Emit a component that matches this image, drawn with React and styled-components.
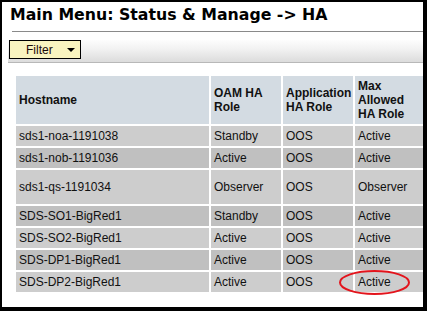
import React from "react";
import styled, { createGlobalStyle } from "styled-components";

const Global = createGlobalStyle`
  html, body { margin: 0; padding: 0; background: #fff; }
  body { font-family: "Liberation Sans", Arial, sans-serif; }
`;

const Frame = styled.div`
  box-sizing: border-box;
  width: 427px;
  height: 311px;
  border-style: solid;
  border-color: #000;
  border-width: 2px 4px 4px 2px;
  background: #fff;
  overflow: hidden;
  display: flex;
  flex-direction: column;
`;

const Title = styled.h1`
  margin: 0;
  padding: 4px 0 0 8px;
  height: 24px;
  box-sizing: border-box;
  font-family: "DejaVu Sans", Verdana, sans-serif;
  font-weight: bold;
  font-size: 15.75px;
  line-height: 18px;
  color: #000;
  white-space: nowrap;
`;

const Rule = styled.div`
  margin: 5px 0 0 10px;
  height: 1px;
  background: #8a8a8a;
`;

const FilterBar = styled.div`
  margin: 8px 0 0 6px;
  height: 23px;
  box-sizing: border-box;
  background: linear-gradient(to bottom, #fdfdfd 0%, #f2f2f2 40%, #dcdcdc 100%);
  border-bottom: 1px solid #b8b8b8;
  display: flex;
  align-items: flex-start;
  padding-left: 1px;
`;

const FilterButton = styled.button`
  box-sizing: border-box;
  width: 72px;
  height: 19px;
  margin: 0;
  padding: 0 0 0 16px;
  background: #f9f4c0;
  border: 1px solid #000;
  display: flex;
  align-items: center;
  font-family: "Liberation Sans", Arial, sans-serif;
  font-size: 12px;
  color: #1a0a0a;
  cursor: pointer;
`;

const Caret = styled.span`
  margin-left: 14px;
  width: 0;
  height: 0;
  border-left: 4px solid transparent;
  border-right: 4px solid transparent;
  border-top: 4px solid #000;
`;

const TableWrap = styled.div`
  margin: 11px 0 0 12px;
`;

const Table = styled.table`
  border-collapse: separate;
  border-spacing: 2px;
  table-layout: fixed;
  width: 413px;
  font-family: "Liberation Sans", Arial, sans-serif;
  font-size: 12px;
  color: #111;
`;

const Th = styled.th`
  width: ${p => p.$w}px;
  height: 48px;
  padding: 0 3px;
  background: #d3dbe2;
  text-align: left;
  vertical-align: middle;
  font-weight: bold;
  line-height: 14px;
  box-sizing: border-box;
`;

const Td = styled.td`
  height: ${p => (p.$tall ? 34 : 20)}px;
  padding: 0 3px;
  background: ${p => (p.$dark ? "#c0c0c0" : "#cdcdcd")};
  vertical-align: middle;
  line-height: 14px;
  white-space: nowrap;
  box-sizing: border-box;
`;

const Marked = styled.div`
  position: relative;
`;

const Ellipse = styled.svg`
  position: absolute;
  left: -19px;
  top: -5px;
  width: 71px;
  height: 25px;
  overflow: visible;
  pointer-events: none;
`;

const rows = [
  ["sds1-noa-1191038", "Standby", "OOS", "Active"],
  ["sds1-nob-1191036", "Active", "OOS", "Active"],
  ["sds1-qs-1191034", "Observer", "OOS", "Observer", true],
  ["SDS-SO1-BigRed1", "Standby", "OOS", "Active"],
  ["SDS-SO2-BigRed1", "Active", "OOS", "Active"],
  ["SDS-DP1-BigRed1", "Active", "OOS", "Active"],
  ["SDS-DP2-BigRed1", "Active", "OOS", "Active"],
];

export default function App() {
  return (
    <>
      <Global />
      <Frame>
        <Title>Main Menu: Status &amp; Manage -&gt; HA</Title>
        <Rule />
        <FilterBar>
          <FilterButton>
            Filter
            <Caret />
          </FilterButton>
        </FilterBar>
        <TableWrap>
          <Table>
            <thead>
              <tr>
                <Th $w={193}>Hostname</Th>
                <Th $w={70}>OAM HA<br />Role</Th>
                <Th $w={70}>Application<br />HA Role</Th>
                <Th $w={70}>Max<br />Allowed<br />HA Role</Th>
              </tr>
            </thead>
            <tbody>
              {rows.map((r, i) => {
                const last = i === rows.length - 1;
                return (
                  <tr key={r[0]}>
                    <Td $dark={i % 2 === 1} $tall={r[4]}>{r[0]}</Td>
                    <Td $dark={i % 2 === 1} $tall={r[4]}>{r[1]}</Td>
                    <Td $dark={i % 2 === 1} $tall={r[4]}>{r[2]}</Td>
                    <Td $dark={i % 2 === 1} $tall={r[4]}>
                      {last ? (
                        <Marked>
                          {r[3]}
                          <Ellipse viewBox="0 0 71 25">
                            <ellipse cx="35.5" cy="12.5" rx="34.5" ry="11.5" fill="none" stroke="#e3141c" strokeWidth="2" />
                          </Ellipse>
                        </Marked>
                      ) : (
                        r[3]
                      )}
                    </Td>
                  </tr>
                );
              })}
            </tbody>
          </Table>
        </TableWrap>
      </Frame>
    </>
  );
}
